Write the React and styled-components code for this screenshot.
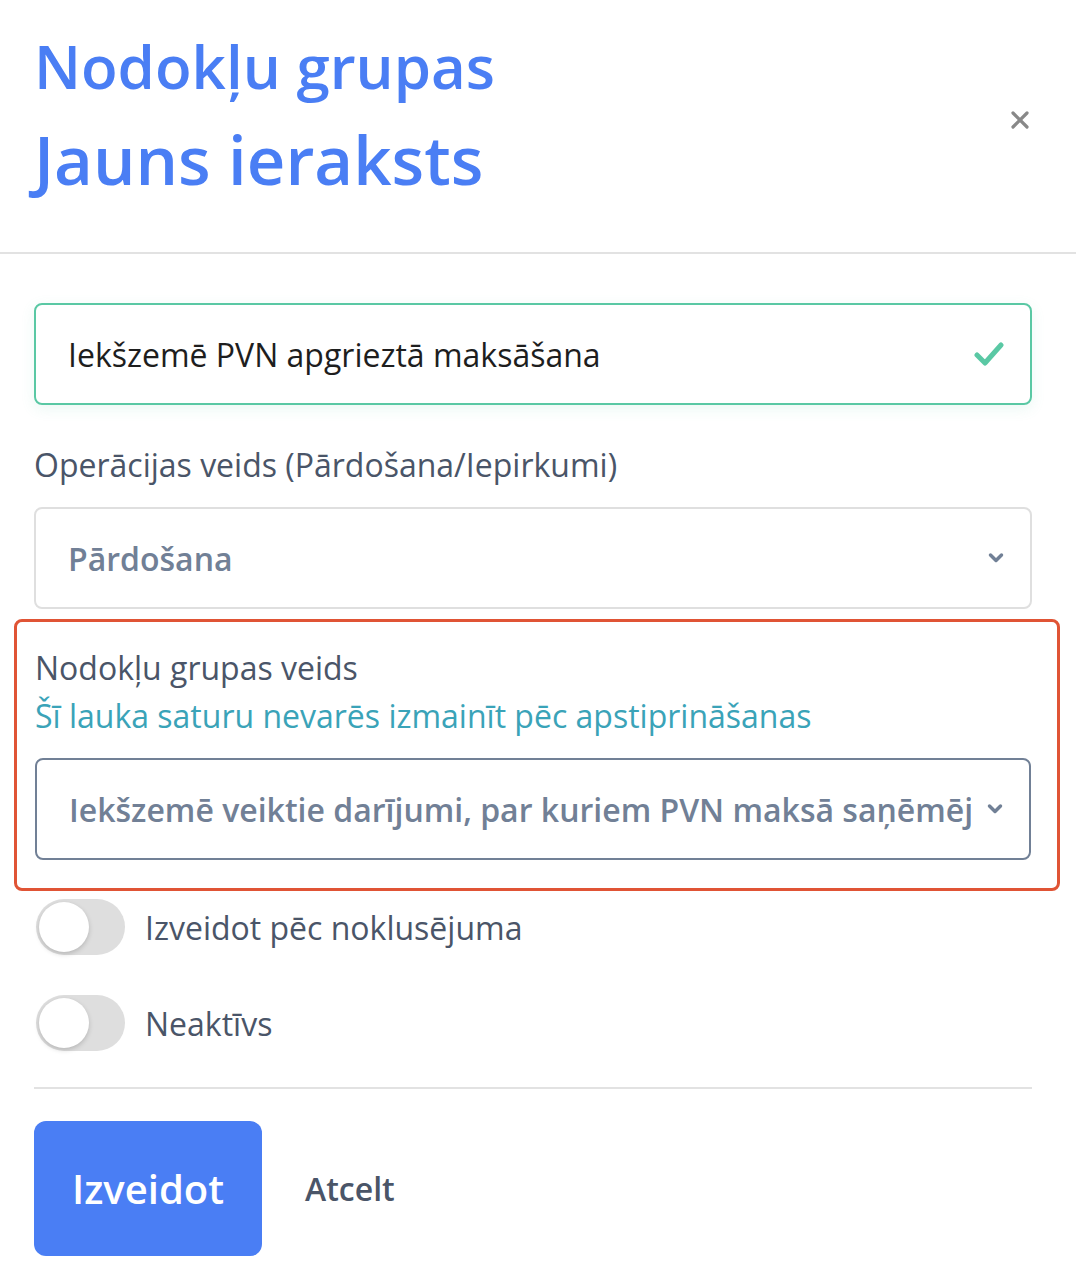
import React from "react";
import styled, { createGlobalStyle } from "styled-components";

const GlobalStyle = createGlobalStyle`
  body {
    margin: 0;
    background: #fff;
    font-family: "Open Sans", "Noto Sans", sans-serif;
  }
`;

const Modal = styled.div`
  width: 1076px;
  background: #fff;
`;

const Header = styled.div`
  display: flex;
  justify-content: space-between;
  align-items: center;
  padding: 20px 44px 46px 34px;
  border-bottom: 2px solid #e2e2e2;
`;

const Title = styled.h1`
  margin: 0;
  font-size: ${(p) => (p.$large ? "67px" : "60px")};
  font-weight: 600;
  line-height: 93px;
  color: #4a7ef4;
`;

const CloseButton = styled.button`
  width: 24px;
  height: 24px;
  padding: 0;
  margin-top: 14px;
  border: none;
  background: none;
  display: flex;
  align-items: center;
  justify-content: center;
  cursor: pointer;
`;

const Body = styled.div`
  display: flex;
  flex-direction: column;
  padding: 49px 44px 26px 34px;
`;

const InputBox = styled.div`
  display: flex;
  align-items: center;
  justify-content: space-between;
  height: 102px;
  box-sizing: border-box;
  padding: 0 26px 0 32px;
  border: 2px solid ${(p) => (p.$valid ? "#5ac8a4" : p.$dark ? "#718096" : "#dfdfdf")};
  border-radius: 8px;
  box-shadow: ${(p) => (p.$valid ? "0 4px 14px rgba(90, 200, 164, 0.12)" : "none")};
  font-size: 32px;
  color: ${(p) => (p.$select ? "#718096" : "#1e1e1e")};
  font-weight: ${(p) => (p.$select ? 600 : 400)};
`;

const ValueText = styled.span`
  overflow: hidden;
  white-space: nowrap;
  flex: 1;
  margin-right: 16px;
`;

const Label = styled.div`
  font-size: 32px;
  color: #4a5568;
  line-height: 44px;
  margin: ${(p) => p.$margin || "0"};
`;

const Hint = styled.div`
  font-size: 32px;
  color: #3aa3b8;
  line-height: 44px;
  margin: 4px 0 20px;
`;

const ErrorBox = styled.div`
  margin: 10px -28px 8px -20px;
  padding: 24px 26px 28px 18px;
  border: 3px solid #e05435;
  border-radius: 8px;
`;

const ToggleRow = styled.label`
  display: flex;
  align-items: center;
  gap: 20px;
  height: 56px;
  margin-bottom: ${(p) => p.$mb || "0"};
  font-size: 32px;
  color: #4a5568;
`;

const Track = styled.span`
  position: relative;
  width: 89px;
  height: 56px;
  margin-left: 2px;
  border-radius: 28px;
  background: #dedede;
  flex-shrink: 0;
`;

const Knob = styled.span`
  position: absolute;
  top: 3px;
  left: 3px;
  width: 50px;
  height: 50px;
  border-radius: 50%;
  background: #fff;
  box-shadow: 0 2px 5px rgba(0, 0, 0, 0.18);
`;

const Divider = styled.hr`
  border: none;
  border-top: 2px solid #e2e2e2;
  margin: 0 0 32px;
`;

const Actions = styled.div`
  display: flex;
  align-items: center;
  gap: 43px;
`;

const PrimaryButton = styled.button`
  width: 228px;
  height: 135px;
  border: none;
  border-radius: 12px;
  background: #4a7ef4;
  color: #fff;
  font-family: inherit;
  font-size: 40px;
  font-weight: 600;
  cursor: pointer;
`;

const LinkButton = styled.button`
  border: none;
  background: none;
  padding: 0;
  font-family: inherit;
  font-size: 32px;
  font-weight: 600;
  color: #4a5568;
  cursor: pointer;
`;

const Check = () => (
  <svg width="30" height="26" viewBox="0 0 30 26">
    <path d="M3 14 L11 22 L27 4" fill="none" stroke="#5ac8a4" strokeWidth="5" strokeLinecap="round" strokeLinejoin="round" />
  </svg>
);

const Chevron = () => (
  <svg width="16" height="12" viewBox="0 0 16 12">
    <path d="M2.5 3 L8 8.5 L13.5 3" fill="none" stroke="#718096" strokeWidth="3.5" strokeLinecap="round" strokeLinejoin="round" />
  </svg>
);

const Toggle = ({ children, mb }) => (
  <ToggleRow $mb={mb}>
    <Track>
      <Knob />
    </Track>
    {children}
  </ToggleRow>
);

const App = () => (
  <Modal>
    <GlobalStyle />
    <Header>
      <div>
        <Title>Nodokļu grupas</Title>
        <Title $large>Jauns ieraksts</Title>
      </div>
      <CloseButton>
        <svg width="20" height="20" viewBox="0 0 20 20">
          <path d="M3 3 L17 17 M17 3 L3 17" stroke="#888" strokeWidth="3.2" strokeLinecap="round" />
        </svg>
      </CloseButton>
    </Header>
    <Body>
      <InputBox $valid>
        <ValueText>Iekšzemē PVN apgrieztā maksāšana</ValueText>
        <Check />
      </InputBox>
      <Label $margin="38px 0 20px">Operācijas veids (Pārdošana/Iepirkumi)</Label>
      <InputBox $select>
        <ValueText>Pārdošana</ValueText>
        <Chevron />
      </InputBox>
      <ErrorBox>
        <Label>Nodokļu grupas veids</Label>
        <Hint>Šī lauka saturu nevarēs izmainīt pēc apstiprināšanas</Hint>
        <InputBox $select $dark>
          <ValueText>Iekšzemē veiktie darījumi, par kuriem PVN maksā saņēmējs</ValueText>
          <Chevron />
        </InputBox>
      </ErrorBox>
      <Toggle mb="40px">Izveidot pēc noklusējuma</Toggle>
      <Toggle mb="36px">Neaktīvs</Toggle>
      <Divider />
      <Actions>
        <PrimaryButton>Izveidot</PrimaryButton>
        <LinkButton>Atcelt</LinkButton>
      </Actions>
    </Body>
  </Modal>
);

export default App;
